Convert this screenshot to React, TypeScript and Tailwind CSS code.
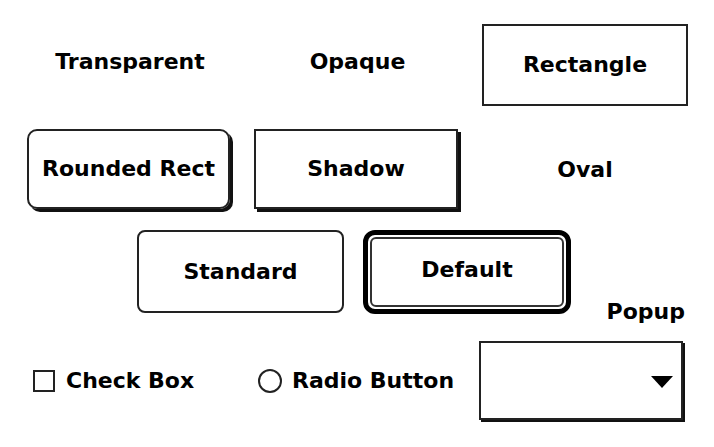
const font = { fontFamily: '"DejaVu Sans", "Liberation Sans", sans-serif' };

function Label({ children }: { children: React.ReactNode }) {
  return (
    <span className="text-[22px] leading-[22px] font-bold text-black whitespace-nowrap">
      {children}
    </span>
  );
}

export default function App() {
  return (
    <div className="w-[714px] h-[447px] bg-white overflow-hidden pt-[24px]" style={font}>
      {/* Row 1: transparent, opaque, rectangle */}
      <div className="grid grid-cols-[206px_207px_206px] gap-x-[21px] pl-[27px] h-[82px]">
        <div className="flex items-center justify-center pb-[7px]">
          <Label>Transparent</Label>
        </div>
        <div className="flex items-center justify-center pb-[7px]">
          <Label>Opaque</Label>
        </div>
        <div className="flex items-center justify-center border-2 border-[#222]">
          <Label>Rectangle</Label>
        </div>
      </div>

      {/* Row 2: rounded rect, shadow, oval */}
      <div className="grid grid-cols-[206px_207px_206px] gap-x-[21px] pl-[27px] h-[83px] mt-[23px]">
        <div>
          <div className="w-[203px] h-[80px] flex items-center justify-center border-2 border-[#222] rounded-[10px] shadow-[3px_3px_0_#111]">
            <Label>Rounded Rect</Label>
          </div>
        </div>
        <div>
          <div className="w-[204px] h-[80px] flex items-center justify-center border-2 border-[#222] shadow-[3px_3px_0_#111]">
            <Label>Shadow</Label>
          </div>
        </div>
        <div className="flex items-center justify-center h-[80px] pt-[2px]">
          <Label>Oval</Label>
        </div>
      </div>

      {/* Row 3: standard, default */}
      <div className="flex items-center gap-[19px] pl-[137px] h-[85px] mt-[17px]">
        <div className="w-[207px] h-[83px] flex items-center justify-center border-2 border-[#222] rounded-[8px]">
          <Label>Standard</Label>
        </div>
        <div className="w-[208px] h-[84px] flex border-[5px] border-black rounded-[12px] p-[2px]">
          <div className="flex-1 flex items-center justify-center border-2 border-[#333] rounded-[6px] pb-[4px]">
            <Label>Default</Label>
          </div>
        </div>
      </div>

      {/* Row 4: check box, radio button, popup */}
      <div className="flex items-end pl-[33px] -mt-[13px]">
        <div className="w-[225px] h-[79px] flex items-center gap-[11px]">
          <span className="w-[22px] h-[22px] border-2 border-[#222] shrink-0" />
          <Label>Check Box</Label>
        </div>
        <div className="w-[221px] h-[79px] flex items-center gap-[10px]">
          <span className="w-[24px] h-[24px] border-2 border-[#222] rounded-full shrink-0" />
          <Label>Radio Button</Label>
        </div>
        <div className="w-[206px] flex flex-col">
          <div className="text-right pr-[0px] mb-[15px]">
            <Label>Popup</Label>
          </div>
          <div className="w-[204px] h-[79px] flex items-center justify-end pr-[8px] pt-[2px] border-2 border-[#222] shadow-[2px_2px_0_#111]">
            <svg width="22" height="12" viewBox="0 0 22 12">
              <polygon points="0,0 22,0 11,12" fill="#000" />
            </svg>
          </div>
        </div>
      </div>
    </div>
  );
}
